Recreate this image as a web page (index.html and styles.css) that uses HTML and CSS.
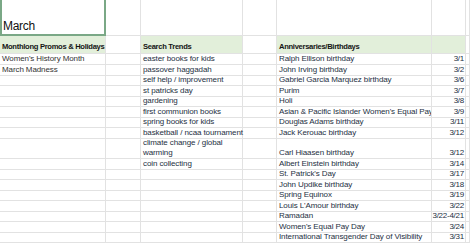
FILE: index.html
```html
<!DOCTYPE html>
<html>
<head>
<meta charset="utf-8">
<link rel="stylesheet" href="styles.css">
</head>
<body>
<div class="sheet">
  <div class="row title">
    <div class="cell sel"><span class="month">March</span></div>
    <div class="cell"></div><div class="cell"></div><div class="cell"></div><div class="cell"></div><div class="cell"></div><div class="cell"></div>
  </div>
  <div class="row head">
    <div class="cell hd">Monthlong Promos &amp; Holidays</div>
    <div class="cell"></div>
    <div class="cell hd">Search Trends</div>
    <div class="cell"></div>
    <div class="cell hd">Anniversaries/Birthdays</div>
    <div class="cell hd"></div>
    <div class="cell"></div>
  </div>
  <div class="row"><div class="cell a">Women's History Month</div><div class="cell"></div><div class="cell t">easter books for kids</div><div class="cell"></div><div class="cell e">Ralph Ellison birthday</div><div class="cell d">3/1</div><div class="cell"></div></div>
  <div class="row"><div class="cell a">March Madness</div><div class="cell"></div><div class="cell t">passover haggadah</div><div class="cell"></div><div class="cell e">John Irving birthday</div><div class="cell d">3/2</div><div class="cell"></div></div>
  <div class="row"><div class="cell"></div><div class="cell"></div><div class="cell t">self help / improvement</div><div class="cell"></div><div class="cell e">Gabriel Garcia Marquez birthday</div><div class="cell d">3/6</div><div class="cell"></div></div>
  <div class="row"><div class="cell"></div><div class="cell"></div><div class="cell t">st patricks day</div><div class="cell"></div><div class="cell e">Purim</div><div class="cell d">3/7</div><div class="cell"></div></div>
  <div class="row"><div class="cell"></div><div class="cell"></div><div class="cell t">gardening</div><div class="cell"></div><div class="cell e">Holi</div><div class="cell d">3/8</div><div class="cell"></div></div>
  <div class="row"><div class="cell"></div><div class="cell"></div><div class="cell t">first communion books</div><div class="cell"></div><div class="cell e">Asian &amp; Pacific Islander Women's Equal Pay Day</div><div class="cell d">3/9</div><div class="cell"></div></div>
  <div class="row"><div class="cell"></div><div class="cell"></div><div class="cell t">spring books for kids</div><div class="cell"></div><div class="cell e">Douglas Adams birthday</div><div class="cell d">3/11</div><div class="cell"></div></div>
  <div class="row"><div class="cell"></div><div class="cell"></div><div class="cell t">basketball / ncaa tournament</div><div class="cell"></div><div class="cell e">Jack Kerouac birthday</div><div class="cell d">3/12</div><div class="cell"></div></div>
  <div class="row tall"><div class="cell"></div><div class="cell"></div><div class="cell t wrap">climate change / global warming</div><div class="cell"></div><div class="cell e">Carl Hiaasen birthday</div><div class="cell d">3/12</div><div class="cell"></div></div>
  <div class="row"><div class="cell"></div><div class="cell"></div><div class="cell t">coin collecting</div><div class="cell"></div><div class="cell e">Albert Einstein birthday</div><div class="cell d">3/14</div><div class="cell"></div></div>
  <div class="row"><div class="cell"></div><div class="cell"></div><div class="cell"></div><div class="cell"></div><div class="cell e">St. Patrick's Day</div><div class="cell d">3/17</div><div class="cell"></div></div>
  <div class="row"><div class="cell"></div><div class="cell"></div><div class="cell"></div><div class="cell"></div><div class="cell e">John Updike birthday</div><div class="cell d">3/18</div><div class="cell"></div></div>
  <div class="row"><div class="cell"></div><div class="cell"></div><div class="cell"></div><div class="cell"></div><div class="cell e">Spring Equinox</div><div class="cell d">3/19</div><div class="cell"></div></div>
  <div class="row"><div class="cell"></div><div class="cell"></div><div class="cell"></div><div class="cell"></div><div class="cell e">Louis L'Amour birthday</div><div class="cell d">3/22</div><div class="cell"></div></div>
  <div class="row"><div class="cell"></div><div class="cell"></div><div class="cell"></div><div class="cell"></div><div class="cell e">Ramadan</div><div class="cell d">3/22-4/21</div><div class="cell"></div></div>
  <div class="row"><div class="cell"></div><div class="cell"></div><div class="cell"></div><div class="cell"></div><div class="cell e">Women's Equal Pay Day</div><div class="cell d">3/24</div><div class="cell"></div></div>
  <div class="row"><div class="cell"></div><div class="cell"></div><div class="cell"></div><div class="cell"></div><div class="cell e">International Transgender Day of Visibility</div><div class="cell d">3/31</div><div class="cell"></div></div>
  <div class="row"><div class="cell"></div><div class="cell"></div><div class="cell"></div><div class="cell"></div><div class="cell"></div><div class="cell"></div><div class="cell"></div></div>
</div>
</body>
</html>
```
FILE: styles.css
```css
html, body {
  margin: 0;
  padding: 0;
  background: #ffffff;
}
body {
  font-family: "Liberation Sans", Arial, sans-serif;
  font-size: 8px;
  letter-spacing: -0.1px;
  color: #2a2a2a;
  overflow: hidden;
}
.sheet {
  width: 470px;
  display: flex;
  flex-direction: column;
}
.row {
  display: grid;
  grid-template-columns: 106px 35px 102px 34px 155px 34px 1fr;
  height: 10.5px;
  flex: none;
}
.row.title { height: 36px; }
.row.head { height: 18px; }
.row.tall { height: 21px; }
.cell {
  box-sizing: border-box;
  border-right: 1px solid #e2e2e2;
  border-bottom: 1px solid #e2e2e2;
  padding: 0 1px 0 2px;
  display: flex;
  align-items: flex-end;
  line-height: 10px;
  white-space: nowrap;
  overflow: hidden;
  min-width: 0;
}
.cell.sel {
  border-left: 2px solid #7aa886;
  border-right: 2px solid #7aa886;
  border-bottom: 2px solid #7aa886;
  padding-left: 1px;
  padding-bottom: 1px;
}
.month {
  font-size: 12px;
  line-height: 14px;
  letter-spacing: -0.3px;
  color: #111111;
}
.hd {
  background: #e2efda;
  font-weight: bold;
  font-size: 7.6px;
  letter-spacing: -0.3px;
  color: #151515;
  padding-bottom: 1px;
}
.a { color: #333333; overflow: visible; }
.t { color: #25303f; overflow: visible; }
.e { color: #25303f; }
.d {
  color: #25303f;
  justify-content: flex-end;
  padding: 0 1px 0 0;
  letter-spacing: -0.25px;
}
.wrap {
  white-space: normal;
  flex-direction: column;
  align-items: flex-start;
  justify-content: flex-end;
}
```
